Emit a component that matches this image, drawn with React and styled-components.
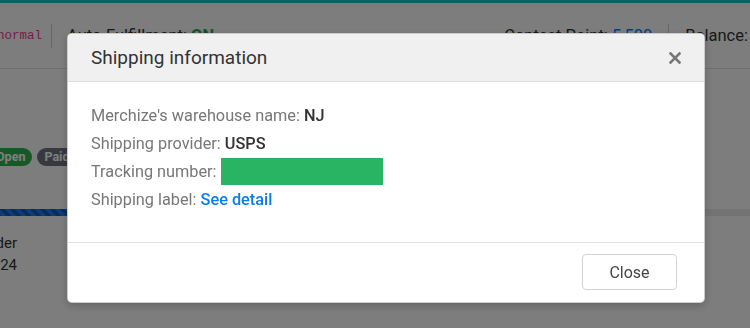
import React from 'react'
import styled, { createGlobalStyle } from 'styled-components'

const GlobalStyle = createGlobalStyle`
  html, body {
    margin: 0;
    padding: 0;
    background: #fafbfa;
    font-family: Roboto, "Liberation Sans", Arial, sans-serif;
    overflow: hidden;
  }
`

const Page = styled.div`
  width: 750px;
  height: 328px;
  overflow: hidden;
  color: #333;
`

const TopBar = styled.div`
  height: 3px;
  background: #1fc4c2;
`

const InfoBar = styled.div`
  height: 65px;
  display: flex;
  align-items: center;
  border-bottom: 1px solid #dedede;
  font-size: 16.5px;
  white-space: nowrap;
`

const Code = styled.code`
  font-family: "Liberation Mono", "DejaVu Sans Mono", monospace;
  font-size: 12.5px;
  color: #e83e8c;
  margin-left: -3px;
`

const Divider = styled.span`
  width: 1px;
  height: 24px;
  background: #cfcfcf;
  margin: 0 ${p => p.$after || 16}px 0 ${p => p.$before || 16}px;
`

const Strong = styled.span`
  color: ${p => p.$color};
  font-weight: ${p => p.$weight || 400};
`

const RightGroup = styled.div`
  margin-left: auto;
  display: flex;
  align-items: center;
  padding-right: 2px;
`

const Badges = styled.div`
  display: flex;
  gap: 5px;
  margin: 79px 0 0 -11px;
`

const Badge = styled.span`
  height: 18px;
  line-height: 18px;
  padding: 0 7px;
  border-radius: 9px;
  font-size: 12.5px;
  font-weight: 700;
  color: #fff;
  background: ${p => p.$bg};
`

const Track = styled.div`
  height: 7px;
  margin-top: 43px;
  background: #e6e7e8;
`

const Fill = styled.div`
  height: 100%;
  width: 50%;
  background-color: #1a78f0;
  background-image: linear-gradient(
    45deg,
    rgba(0, 0, 0, 0.25) 25%,
    transparent 25%,
    transparent 50%,
    rgba(0, 0, 0, 0.25) 50%,
    rgba(0, 0, 0, 0.25) 75%,
    transparent 75%,
    transparent
  );
  background-size: 10px 10px;
`

const Cell = styled.div`
  width: 17px;
  margin-top: 16px;
  display: flex;
  flex-direction: column;
  align-items: flex-end;
  font-size: 15px;
  line-height: 22px;
  white-space: nowrap;
`

const Overlay = styled.div`
  position: fixed;
  inset: 0;
  background: rgba(0, 0, 0, 0.5);
`

const Modal = styled.div`
  width: 638px;
  margin: 33px 0 0 67px;
  background: #fff;
  border-radius: 5px;
  border: 1px solid rgba(0, 0, 0, 0.2);
  box-sizing: border-box;
  overflow: hidden;
  box-shadow: 0 3px 9px rgba(0, 0, 0, 0.2);
`

const Header = styled.div`
  height: 47px;
  display: flex;
  align-items: center;
  justify-content: space-between;
  padding: 0 23px;
  background: #f0f0f0;
  border-bottom: 1px solid #dddde2;
`

const Title = styled.h4`
  margin: 0;
  font-size: 19px;
  font-weight: 400;
  color: #333;
`

const CloseX = styled.button`
  border: 0;
  background: none;
  padding: 0;
  display: flex;
  cursor: pointer;
`

const Body = styled.div`
  padding: 19px 23px 29px;
  border-bottom: 1px solid #dfdfe6;
`

const Row = styled.div`
  height: 28px;
  display: flex;
  align-items: center;
  font-size: 16.3px;
  color: #777;
  white-space: pre;
`

const Value = styled.span`
  color: ${p => p.$link ? '#0a7cf0' : '#333'};
  font-weight: 500;
  cursor: ${p => p.$link ? 'pointer' : 'auto'};
`

const Hidden = styled.span`
  display: inline-block;
  width: 162px;
  height: 27px;
  background: #28b463;
`

const Footer = styled.div`
  padding: 11px 27px 12px;
  display: flex;
  justify-content: flex-end;
`

const Button = styled.button`
  width: 95px;
  height: 36px;
  border: 1px solid #d2d2d2;
  border-radius: 4px;
  background: #fff;
  font-family: Roboto, "Liberation Sans", Arial, sans-serif;
  font-size: 16px;
  color: #444;
  padding-bottom: 1px;
  cursor: pointer;
`

const rows = [
  { label: "Merchize's warehouse name: ", value: 'NJ' },
  { label: 'Shipping provider: ', value: 'USPS' },
  { label: 'Tracking number: ', hidden: true },
  { label: 'Shipping label: ', value: 'See detail', link: true },
]

function App() {
  return (
    <>
      <GlobalStyle />
      <Page>
        <TopBar />
        <InfoBar>
          <Code>normal</Code>
          <Divider $before={9} $after={15} />
          <span>
            Auto-Fulfillment: <Strong $color="#28a745" $weight={700}>ON</Strong>
          </span>
          <RightGroup>
            <span>
              Contest Point: <Strong $color="#007bff">5,500</Strong>
            </span>
            <Divider />
            <span>Balance:</span>
          </RightGroup>
        </InfoBar>
        <Badges>
          <Badge $bg="#2fb24c">Open</Badge>
          <Badge $bg="#6c757d">Paid</Badge>
        </Badges>
        <Track>
          <Fill />
        </Track>
        <Cell>
          <span>Order</span>
          <span>2024</span>
        </Cell>
      </Page>

      <Overlay>
        <Modal>
          <Header>
            <Title>Shipping information</Title>
            <CloseX aria-label="Close">
              <svg width="12" height="12" viewBox="0 0 12 12">
                <path d="M1.5 1.5 L10.5 10.5 M10.5 1.5 L1.5 10.5" stroke="#777" strokeWidth="2.6" strokeLinecap="square" />
              </svg>
            </CloseX>
          </Header>
          <Body>
            {rows.map(r => (
              <Row key={r.label}>
                {r.label}
                {r.hidden ? <Hidden /> : <Value $link={r.link}>{r.value}</Value>}
              </Row>
            ))}
          </Body>
          <Footer>
            <Button>Close</Button>
          </Footer>
        </Modal>
      </Overlay>
    </>
  )
}

export default App
